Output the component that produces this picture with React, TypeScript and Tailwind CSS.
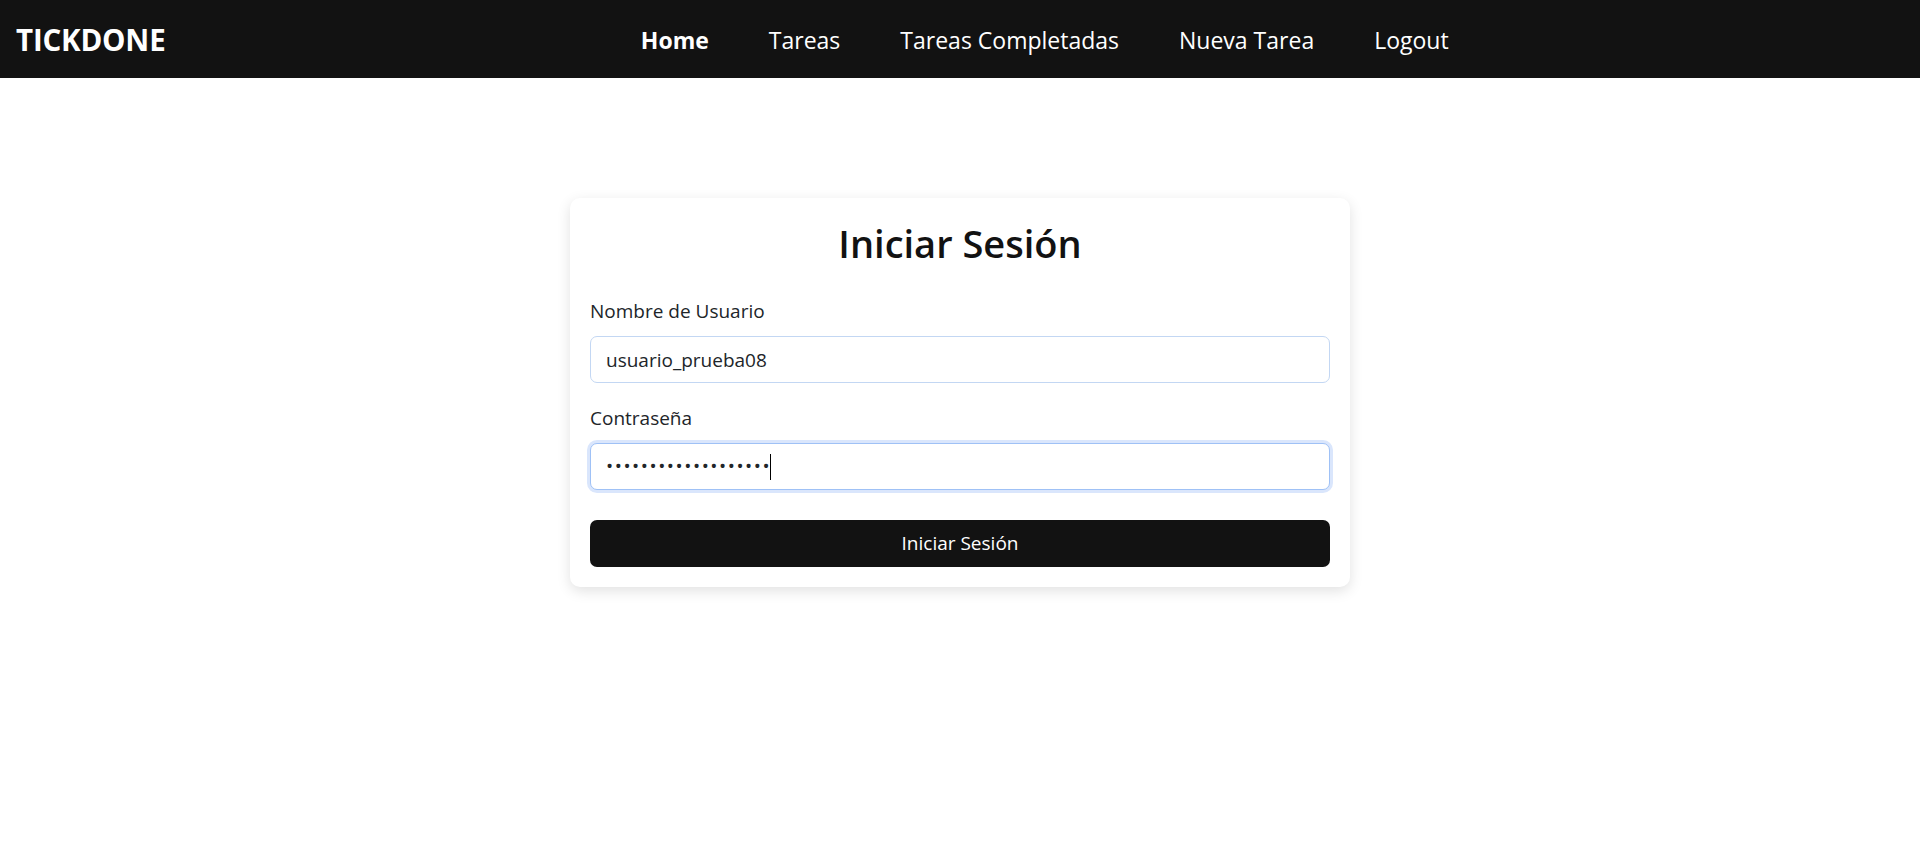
import React from "react";

const font = { fontFamily: '"Open Sans", "Noto Sans", sans-serif' };

export default function App() {
  const links = ["Home", "Tareas", "Tareas Completadas", "Nueva Tarea", "Logout"];
  return (
    <div className="min-h-[857px] bg-white text-[#212529]" style={font}>
      <nav className="h-[78px] bg-[#121212] flex items-center px-4">
        <a className="text-white font-bold text-[29.5px] mr-[20px] leading-none tracking-[-0.2px] pt-[1px]">TICKDONE</a>
        <ul className="flex-1 flex justify-center items-center pt-[2px]">
          {links.map((l, i) => (
            <li key={l}>
              <a className={"px-[30px] text-white text-[23px] " + (i === 0 ? "font-bold" : "font-normal")}>{l}</a>
            </li>
          ))}
        </ul>
      </nav>

      <main className="flex justify-center pt-[120px]">
        <div className="w-[780px] bg-white rounded-[10px] shadow-[0_4px_14px_rgba(0,0,0,0.12)] p-[20px]">
          <h2 className="text-center text-[38px] leading-[48px] font-semibold text-[#121212] mb-[29px] pt-[1px]">Iniciar Sesión</h2>
          <form>
            <div className="mb-[20px]">
              <label className="block text-[19px] leading-[30px] mb-[10px] text-[#212529]">Nombre de Usuario</label>
              <input
                readOnly
                value="usuario_prueba08"
                className="block w-full h-[47px] rounded-[7px] border border-[#c3d7f3] px-[15px] text-[19px] text-[#212529] outline-none bg-white"
                style={font}
              />
            </div>
            <div className="mb-[30px]">
              <label className="block text-[19px] leading-[30px] mb-[10px] text-[#212529]">Contraseña</label>
              <div className="flex items-center w-full h-[47px] rounded-[7px] border border-[#9fc1f6] shadow-[0_0_0_3px_#dae6fc] px-[15px] bg-white">
                <span className="text-[19px] tracking-[1.55px] text-[#212529]">•••••••••••••••••••</span>
                <span className="w-px h-[26px] bg-black -ml-[1px]"></span>
              </div>
            </div>
            <button type="button" className="w-full h-[47px] rounded-[7px] bg-[#121212] text-white text-[19px]">
              Iniciar Sesión
            </button>
          </form>
        </div>
      </main>
    </div>
  );
}
